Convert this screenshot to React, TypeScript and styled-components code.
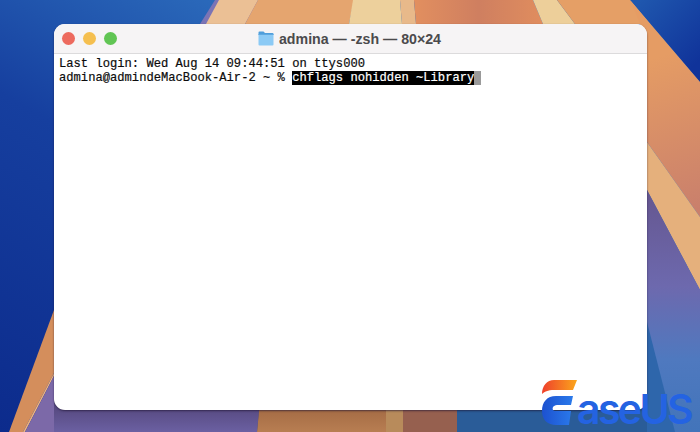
import styled, { createGlobalStyle } from "styled-components";

const GlobalStyle = createGlobalStyle`
  html, body {
    margin: 0;
    padding: 0;
    background: #1a4aa6;
  }
`;

const Desktop = styled.main`
  position: relative;
  width: 700px;
  height: 432px;
  overflow: hidden;
  padding: 24px 53px 22px 54px;
  box-sizing: border-box;
`;

const Wallpaper = styled.svg`
  position: absolute;
  inset: 0;
  width: 700px;
  height: 432px;
  filter: blur(0.5px);
`;

const Terminal = styled.section`
  position: relative;
  height: 100%;
  display: flex;
  flex-direction: column;
  border-radius: 11px;
  overflow: hidden;
  background: #fff;
  box-shadow: 0 1px 2px rgba(30, 20, 50, 0.65);
`;

const TitleBar = styled.header`
  position: relative;
  flex: none;
  height: 29px;
  padding-right: 2px;
  display: flex;
  align-items: center;
  justify-content: center;
  gap: 5px;
  background: #f6f4f5;
  border-bottom: 1px solid #dcdbdc;
`;

const Lights = styled.div`
  position: absolute;
  left: 8px;
  top: 8px;
  display: flex;
  gap: 8px;
`;

const Light = styled.span<{ $color: string }>`
  width: 13px;
  height: 13px;
  border-radius: 50%;
  background: ${({ $color }) => $color};
`;

const Title = styled.h1`
  margin: 0;
  font-family: "Liberation Sans", Arial, sans-serif;
  font-size: 14.2px;
  font-weight: 700;
  line-height: 16px;
  color: #4b4a4c;
  white-space: nowrap;
`;

const Screen = styled.div`
  padding: 3px 5px;
  font-family: "Liberation Mono", "DejaVu Sans Mono", monospace;
  font-size: 12.15px;
  line-height: 14px;
  color: #0c0c0c;
  -webkit-text-stroke: 0.2px currentColor;
`;

const Line = styled.div`
  display: flex;
  height: 14px;
  white-space: pre;
`;

const Selected = styled.span`
  background: #000;
  color: #fff;
`;

const Cursor = styled.span`
  width: 7px;
  height: 14px;
  background: #9a9a9a;
`;

const Logo = styled.div`
  position: absolute;
  left: 541px;
  top: 379px;
  width: 155px;
  height: 50px;
`;

const LogoMark = styled.svg`
  position: absolute;
  left: 0;
  top: 0;
  width: 38px;
  height: 48px;
`;

const LogoText = styled.div`
  position: absolute;
  left: 36px;
  top: 10px;
  font-family: Inter, "Liberation Sans", sans-serif;
  font-size: 41px;
  font-weight: 600;
  line-height: 40px;
  letter-spacing: -2.6px;
  color: #2463e2;
  white-space: nowrap;
`;

const FolderIcon = () => (
  <svg width="16" height="15" viewBox="0 0 16 15" aria-hidden="true">
    <path d="M0.5 1.5Q0.5 0.5 1.5 0.5H5.5L7 2H14.5Q15.5 2 15.5 3V4H0.5Z" fill="#4f9edb" />
    <path d="M0.5 3.5H15.5V13.5Q15.5 14.5 14.5 14.5H1.5Q0.5 14.5 0.5 13.5Z" fill="#8ccaf5" />
    <path d="M0.5 3.5H15.5" stroke="#5aa6e0" strokeWidth="0.8" />
  </svg>
);

const App = () => (
  <Desktop>
    <GlobalStyle />
    <Wallpaper viewBox="0 0 700 432" aria-hidden="true">
      <defs>
        <linearGradient id="sky" x1="0" y1="432" x2="240" y2="0" gradientUnits="userSpaceOnUse">
          <stop offset="0" stopColor="#0c2b8c" />
          <stop offset="0.6" stopColor="#163f9f" />
          <stop offset="1" stopColor="#2c6cbc" />
        </linearGradient>
        <linearGradient id="corner" x1="640" y1="0" x2="700" y2="60" gradientUnits="userSpaceOnUse">
          <stop offset="0" stopColor="#1f57ae" />
          <stop offset="1" stopColor="#10339a" />
        </linearGradient>
        <linearGradient id="right" x1="650" y1="60" x2="700" y2="210" gradientUnits="userSpaceOnUse">
          <stop offset="0" stopColor="#e59c64" />
          <stop offset="1" stopColor="#c97f6c" />
        </linearGradient>
        <linearGradient id="dusk" x1="0" y1="190" x2="0" y2="432" gradientUnits="userSpaceOnUse">
          <stop offset="0" stopColor="#65568f" />
          <stop offset="0.4" stopColor="#6d69ae" />
          <stop offset="0.7" stopColor="#4f79bf" />
          <stop offset="1" stopColor="#4274ba" />
        </linearGradient>
        <linearGradient id="floor" x1="0" y1="410" x2="0" y2="432" gradientUnits="userSpaceOnUse">
          <stop offset="0" stopColor="#594c84" />
          <stop offset="1" stopColor="#6b60a2" />
        </linearGradient>
        <linearGradient id="sand" x1="0" y1="410" x2="0" y2="432" gradientUnits="userSpaceOnUse">
          <stop offset="0" stopColor="#a56c45" />
          <stop offset="1" stopColor="#b87e52" />
        </linearGradient>
        <linearGradient id="ember" x1="414" y1="0" x2="543" y2="0" gradientUnits="userSpaceOnUse">
          <stop offset="0" stopColor="#e28f5f" />
          <stop offset="0.5" stopColor="#cf7f60" />
          <stop offset="1" stopColor="#e08d5e" />
        </linearGradient>
        <linearGradient id="flame" x1="0" y1="0" x2="36" y2="0" gradientUnits="userSpaceOnUse">
          <stop offset="0" stopColor="#ee3d2c" />
          <stop offset="1" stopColor="#fba61c" />
        </linearGradient>
        <linearGradient id="ice" x1="0" y1="0" x2="36" y2="0" gradientUnits="userSpaceOnUse">
          <stop offset="0" stopColor="#1c50cf" />
          <stop offset="1" stopColor="#2c7fee" />
        </linearGradient>
      </defs>

      <rect width="700" height="432" fill="url(#sky)" />
      <polygon points="630,0 700,0 700,82" fill="url(#corner)" />

      {/* top strips */}
      <polygon points="215,0 260,0 245,24 200,24" fill="#7b74b5" />
      <polygon points="219,0 258,0 245,24 206,24" fill="#ebc095" />
      <polygon points="258,0 354,0 349,24 245,24" fill="#e5a56f" />
      <polygon points="353,0 400,0 402,24 349,24" fill="#edd09c" />
      <polygon points="400,0 414,0 416,24 402,24" fill="#e8b98a" />
      <polygon points="414,0 533,0 543,24 416,24" fill="url(#ember)" />
      <polygon points="533,0 557,0 575,24 543,24" fill="#edcf9a" />
      <polygon points="557,0 630,0 650,24 575,24" fill="#e59f66" />

      {/* right side */}
      <polygon points="630,0 700,82 700,217 647,142 640,24" fill="url(#right)" />
      <polygon points="647,142 700,217 700,290 647,190" fill="#e5b07c" />
      <polygon points="647,190 700,290 700,432 647,432" fill="url(#dusk)" />
      <polygon points="647,322 675,432 647,432" fill="#2e66ab" />

      {/* bottom */}
      <polygon points="54,310 54,373 23,432 9,432" fill="#d48e5c" />
      <polygon points="54,373 54,376 25,432 23,432" fill="#eeb27c" />
      <polygon points="54,376 54,432 25,432" fill="#7c69a8" />
      <polygon points="54,400 260,400 257,432 54,432" fill="url(#floor)" />
      <polygon points="260,400 386,400 386,432 257,432" fill="url(#sand)" />
      <rect x="386" y="400" width="17" height="32" fill="#b88b5b" />
      <rect x="403" y="400" width="54" height="32" fill="#96604f" />
      <rect x="457" y="400" width="190" height="32" fill="#2a5c98" />
    </Wallpaper>

    <Terminal>
      <TitleBar>
        <Lights>
          <Light $color="#ed6a5e" />
          <Light $color="#f5bf4f" />
          <Light $color="#61c554" />
        </Lights>
        <FolderIcon />
        <Title>admina — -zsh — 80×24</Title>
      </TitleBar>
      <Screen>
        <Line>Last login: Wed Aug 14 09:44:51 on ttys000</Line>
        <Line>
          <span>{"admina@admindeMacBook-Air-2 ~ % "}</span>
          <Selected>chflags nohidden ~Library</Selected>
          <Cursor />
        </Line>
      </Screen>
    </Terminal>

    <Logo>
      <LogoMark viewBox="0 0 38 48" aria-hidden="true">
        <path d="M36 1H13C6 1 1 7 1 15C3 13 7 11 13 11H32Z" fill="url(#flame)" />
        <path d="M32 17H15C6 17 1 23 1 32C1 41 7 46 15 46H28L30 32H14C12 32 11 30 12 28C13 27 14 26 16 26H30Z" fill="url(#ice)" />
      </LogoMark>
      <LogoText>aseUS</LogoText>
    </Logo>
  </Desktop>
);

export default App;
